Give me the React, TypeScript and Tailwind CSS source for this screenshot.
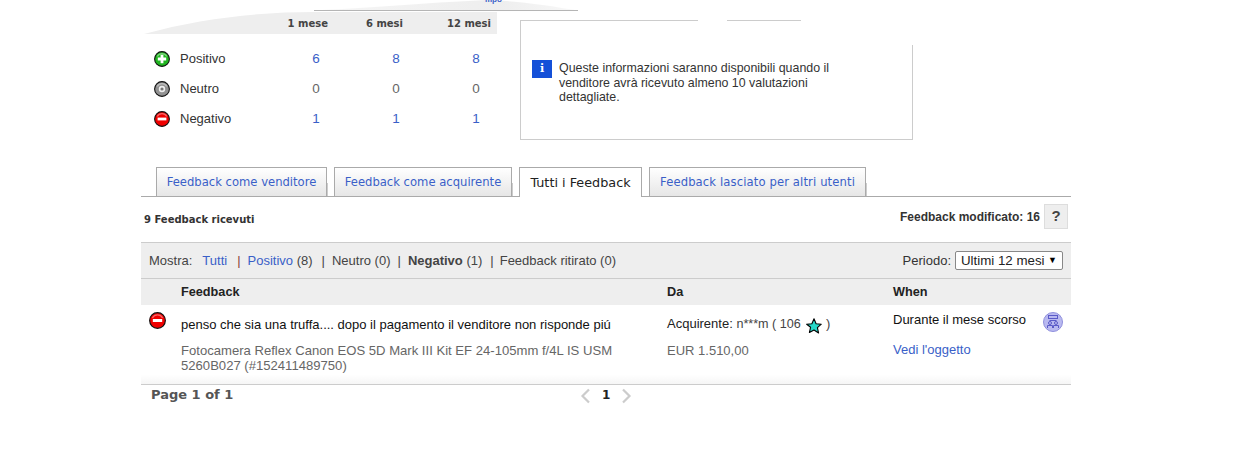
const arial = "font-['Liberation_Sans',Arial,sans-serif]";
const verdana = "font-['DejaVu_Sans',Verdana,sans-serif]";

function RatingIcon({ kind, size = 16 }: { kind: 'plus' | 'neutral' | 'minus'; size?: number }) {
  const fill = kind === 'plus' ? '#1fb51f' : kind === 'minus' ? '#f00000' : '#929292';
  return (
    <svg width={size} height={size} viewBox="0 0 16 16" className="shrink-0">
      <circle cx="8" cy="8" r="7.4" fill={fill} stroke="#111" strokeWidth="1.1" />
      <path d="M3.2 5.600a5.400 5.400 0 0 1 9.600 0" fill="none" stroke="#fff" strokeOpacity="0.4" strokeWidth="1.2" />
      {kind === 'plus' && <path d="M8 3.800v8.400M3.800 8h8.400" stroke="#fff" strokeWidth="2.800" />}
      {kind === 'minus' && <path d="M3.600 8h8.800" stroke="#fff" strokeWidth="2.800" />}
      {kind === 'neutral' && <circle cx="8" cy="8" r="2.400" fill="#777" stroke="#eee" strokeWidth="1.600" />}
    </svg>
  );
}

function StarIcon() {
  return (
    <svg width="16" height="16" viewBox="0 0 16 16" className="shrink-0">
      <path d="M8 .8l2.100 4.900 5.200.5-3.900 3.500 1.200 5.300L8 12l-4.600 2.500 1.200-5.300L.7 6.200l5.200-.5z" fill="#25d8c8" stroke="#000" strokeWidth="1.100" strokeLinejoin="round" />
    </svg>
  );
}

function MembersIcon() {
  return (
    <svg width="20" height="20" viewBox="0 0 20 20" className="shrink-0">
      <circle cx="10" cy="10" r="9.500" fill="#b9b9f0" stroke="#8f8fdc" />
      <g fill="none" stroke="#5a5ac8" strokeWidth="1">
        <rect x="5.500" y="3.500" width="9" height="3" />
        <path d="M6.500 8.500h7" />
        <circle cx="7" cy="11" r="1.500" />
        <circle cx="13" cy="11" r="1.500" />
        <path d="M4.500 16v-2.500h5V16M10.500 16v-2.500h5V16" />
      </g>
    </svg>
  );
}

function Tab({ label, active, wide }: { label: string; active?: boolean; wide?: boolean }) {
  if (active) {
    return (
      <div className={`${verdana} relative -mb-px flex h-[30px] w-[123px] items-center justify-center border border-b-0 border-[#aaa] bg-white text-[12.800px] text-[#222]`}>
        {label}
      </div>
    );
  }
  return (
    <a className={`${verdana} relative flex h-[29px] items-center justify-center border border-b-0 border-[#aaa] bg-gradient-to-b from-white to-[#e6e6e6] pt-px text-[11.600px] text-[#3a5fc8] after:absolute after:-right-[2px] after:bottom-0 after:h-[13px] after:w-px after:bg-[#ccc] ${wide ? 'tracking-[0.12px]' : ''}`}>
      {label}
    </a>
  );
}

const ratings = [
  { kind: 'plus' as const, label: 'Positivo', values: ['6', '8', '8'], link: true },
  { kind: 'neutral' as const, label: 'Neutro', values: ['0', '0', '0'], link: false },
  { kind: 'minus' as const, label: 'Negativo', values: ['1', '1', '1'], link: true },
];

export default function App() {
  return (
    <div className={`${arial} relative h-[449px] w-[1245px] overflow-hidden bg-white pl-[141px] text-[13px] text-[#333]`}>
      {/* swoosh at the top of the ratings panel */}
      <svg width="440" height="35" viewBox="0 0 440 35" className="absolute left-[141px] top-0">
        <defs>
          <linearGradient id="fade" x1="0" x2="1" y1="0" y2="0">
            <stop offset="0" stopColor="#f6f6f6" />
            <stop offset="0.7" stopColor="#eeeeee" />
            <stop offset="1" stopColor="#f8f8f8" />
          </linearGradient>
        </defs>
        <path d="M173 10.500C240 7 300 2 345 0C380 1 410 6 437 10.500Z" fill="url(#fade)" />
        <path d="M173 10.500H437" stroke="#b5b5b5" strokeWidth="1" />
        <path d="M3 34C60 18 120 12 173 12H356V34Z" fill="#eeeeee" />
      </svg>
      <span className="absolute left-[485px] top-[-6px] text-[8px] font-bold text-[#3a5fc8]">mpo</span>

      <div className="w-[930px]">
        <div className="relative flex h-[167px]">
          {/* recent ratings */}
          <div className="relative w-[356px] shrink-0 pt-[12px]">
            <div className={`${verdana} flex h-[22px] items-center pl-[137px] text-[10px] font-bold text-[#444]`}>
              <span className="w-[50px] text-right">1 mese</span>
              <span className="w-[75px] text-right">6 mesi</span>
              <span className="w-[88px] text-right">12 mesi</span>
            </div>
            <div className="pt-[10px]">
              {ratings.map((r) => (
                <div key={r.label} className="flex h-[30px] items-center pl-[13px]">
                  <RatingIcon kind={r.kind} />
                  <span className="ml-[10px] w-[116px]">{r.label}</span>
                  <div className={`flex gap-[40px] text-[13.500px] ${r.link ? 'text-[#3a5fc8]' : 'text-[#666]'}`}>
                    {r.values.map((v, i) => (
                      <span key={i} className="w-[40px] text-center">{v}</span>
                    ))}
                  </div>
                </div>
              ))}
            </div>
          </div>

          {/* detailed ratings placeholder */}
          <div className="relative ml-[23px] mt-[20px] h-[120px] w-[393px] border border-[#ccc]">
            <div className="absolute -top-px left-[177px] h-px w-[29px] bg-white" />
            <div className="absolute -right-px -top-px h-[25px] w-[112px] bg-white" />
            <div className="flex pl-[11px] pt-[39px]">
              <div className="flex h-[18px] w-[20px] shrink-0 items-center justify-center bg-[#1450d8] font-['DejaVu_Serif',serif] text-[11px] font-bold text-white">i</div>
              <p className="ml-[7px] mt-px w-[290px] text-[12.400px] leading-[14.500px] text-[#333]">
                Queste informazioni saranno disponibili quando il venditore avrà ricevuto almeno 10 valutazioni dettagliate.
              </p>
            </div>
          </div>
        </div>

        {/* tabs */}
        <div className="flex h-[30px] items-end gap-[7px] border-b border-[#aaa] pl-[15px]">
          <div className="w-[171px]"><Tab label="Feedback come venditore" /></div>
          <div className="w-[178px]"><Tab label="Feedback come acquirente" /></div>
          <Tab label="Tutti i Feedback" active />
          <div className="w-[217px]"><Tab label="Feedback lasciato per altri utenti" wide /></div>
        </div>

        {/* summary */}
        <div className="flex h-[45px] items-start justify-between pr-[3px] pt-[7px]">
          <span className={`${verdana} pl-[3px] pt-[8px] text-[10px] font-bold text-[#333]`}>9 Feedback ricevuti</span>
          <div className="flex items-center gap-[4px]">
            <span className="text-[12px] font-bold text-[#333]">Feedback modificato: 16</span>
            <div className="flex h-[25px] w-[24px] items-center justify-center border border-[#ddd] bg-[#eee] text-[15px] font-bold text-[#444]">?</div>
          </div>
        </div>

        {/* filters */}
        <div className="flex h-[37px] items-center justify-between border-y border-[#ccc] bg-[#eee] pl-[8px] pr-[8px]">
          <div className="flex items-center whitespace-pre text-[#444]">
            <span>Mostra:</span>
            <a className="ml-[10px] text-[#3a5fc8]">Tutti</a>
            <span className="ml-[10px] text-[#8a3a3a]">|</span>
            <a className="ml-[7px] text-[#3a5fc8]">Positivo</a>
            <span> (8)</span>
            <span className="ml-[9px]">|</span>
            <span className="ml-[7px]">Neutro (0)</span>
            <span className="ml-[7px]">|</span>
            <span className="ml-[7px] font-bold">Negativo</span>
            <span> (1)</span>
            <span className="ml-[8px]">|</span>
            <span className="ml-[6px]">Feedback ritirato (0)</span>
          </div>
          <div className="flex items-center gap-[4px]">
            <span>Periodo:</span>
            <div className="flex h-[19px] w-[108px] items-center justify-between rounded-[2px] border border-[#888] bg-white pl-[5px] pr-[5px] text-[13.300px] text-[#222]">
              <span>Ultimi 12 mesi</span>
              <span className="text-[9px] text-black">▼</span>
            </div>
          </div>
        </div>

        {/* feedback table */}
        <div className="grid h-[26px] grid-cols-[40px_486px_226px_1fr] items-center bg-[#eee] pt-[2px] font-bold text-[#222]">
          <span />
          <span className="text-[12.700px]">Feedback</span>
          <span className="text-[12.700px]">Da</span>
          <span className="text-[12.700px]">When</span>
        </div>
        <div className="grid h-[80px] grid-cols-[40px_486px_226px_1fr] border-b border-[#ccc] bg-gradient-to-b from-white from-88% to-[#f6f6f6]">
          <div className="pl-[8px] pt-[7px]">
            <RatingIcon kind="minus" size={17} />
          </div>
          <div>
            <p className="pt-[13px] leading-[14px] text-[#111]">penso che sia una truffa.... dopo il pagamento il venditore non risponde piú</p>
            <p className="w-[450px] pt-[11px] text-[13.100px] leading-[15px] text-[#666]">Fotocamera Reflex Canon EOS 5D Mark III Kit EF 24-105mm f/4L IS USM 5260B027 (#152411489750)</p>
          </div>
          <div>
            <div className="mt-[12px] flex h-[14px] items-center whitespace-pre text-[#222]">
              <span>Acquirente: </span>
              <span className="text-[12.600px] text-[#444]">n***m ( 106 </span>
              <span className="ml-[2px] mt-[3px]"><StarIcon /></span>
              <span className="text-[#444]"> )</span>
            </div>
            <p className="pt-[12px] leading-[15px] text-[#666]">EUR 1.510,00</p>
          </div>
          <div className="relative">
            <p className="pt-[8px] leading-[14px] text-[#111]">Durante il mese scorso</p>
            <a className="mt-[15px] block leading-[15px] text-[#3a5fc8]">Vedi l'oggetto</a>
            <div className="absolute right-[8px] top-[7px]"><MembersIcon /></div>
          </div>
        </div>

        {/* pagination */}
        <div className="relative flex h-[20px] items-center pl-[10px]">
          <span className={`${verdana} text-[13px] font-bold text-[#555]`}>Page 1 of 1</span>
          <div className="absolute left-[439px] top-[3px] flex items-center gap-[11px]">
            <svg width="11" height="16" viewBox="0 0 11 16"><path d="M9 1.500L2.500 8 9 14.500" fill="none" stroke="#ccc" strokeWidth="2.200" /></svg>
            <span className={`${verdana} -mt-[2px] text-[12px] font-bold text-[#222]`}>1</span>
            <svg width="11" height="16" viewBox="0 0 11 16"><path d="M2 1.500L8.500 8 2 14.500" fill="none" stroke="#ccc" strokeWidth="2.200" /></svg>
          </div>
        </div>
      </div>
    </div>
  );
}
